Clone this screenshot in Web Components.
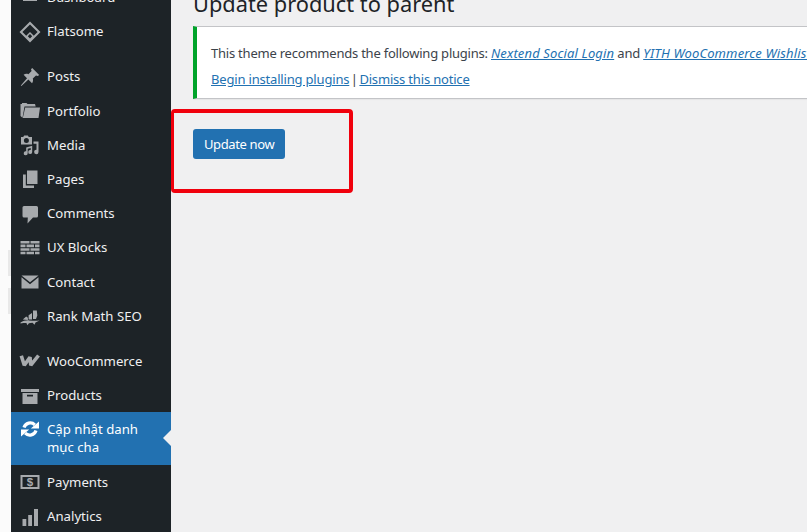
<!DOCTYPE html>
<html><head><meta charset="utf-8"><style>
html,body{margin:0;height:100%;overflow:hidden;background:#f0f0f1}
wp-app{font-family:"Noto Sans","Open Sans",sans-serif;font-size:13px}
</style></head><body>
<wp-app>
  <wp-sidebar slot="side">
    <wp-item label="Dashboard" icon="dash"></wp-item>
    <wp-item label="Flatsome" icon="flat"></wp-item>
    <wp-sep></wp-sep>
    <wp-item label="Posts" icon="pin"></wp-item>
    <wp-item label="Portfolio" icon="folder"></wp-item>
    <wp-item label="Media" icon="media"></wp-item>
    <wp-item label="Pages" icon="pages"></wp-item>
    <wp-item label="Comments" icon="comment"></wp-item>
    <wp-item label="UX Blocks" icon="blocks"></wp-item>
    <wp-item label="Contact" icon="mail"></wp-item>
    <wp-item label="Rank Math SEO" icon="rank"></wp-item>
    <wp-sep></wp-sep>
    <wp-item label="WooCommerce" icon="woo"></wp-item>
    <wp-item label="Products" icon="box"></wp-item>
    <wp-item label="Cập nhật danh mục cha" icon="sync" current></wp-item>
    <wp-item label="Payments" icon="pay"></wp-item>
    <wp-item label="Analytics" icon="chart"></wp-item>
  </wp-sidebar>
  <wp-main slot="main">
    <wp-title>Update product to parent</wp-title>
    <wp-notice>
      <span>This theme recommends the following plugins: <a><em>Nextend Social Login</em></a> and <a><em>YITH WooCommerce Wishlist</em></a>.</span>
      <span slot="actions"><a>Begin installing plugins</a><span class="sep"> | </span><a>Dismiss this notice</a></span>
    </wp-notice>
    <wp-button>Update now</wp-button>
  </wp-main>
  <wp-highlight slot="over"></wp-highlight>
</wp-app>
<script>
const ICONS={
dash:'<path d="M3 10a7 7 0 0 1 14 0v3H3z"/>',
flat:'<path fill-rule="evenodd" d="M10 -.5 20.500 10 10 20.500 -.5 10zM10 2.400 2.400 10l3.800 3.800L10 10l3.800 3.800 3.800-3.800zM10 12 7.800 14.200l2.200 2.200 2.200-2.200z"/>',
pin:'<path d="M12.200 1 19.200 8 17.800 9 16 8.400 12.800 11.600C13.400 13.400 13 15 12 16.200L8.400 12.600 1.400 19 .8 18.400 7 11.200 3.600 7.800C5 6.800 6.600 6.400 8.400 7.200L11.600 4 11 2.200Z"/>',
folder:'<path d="M.5 5V3h1.500V2h4.500l1 1h7.500l.7 2.500H4.500L2.500 16.800 .5 15z"/><path d="M5.200 6.500H20L18.500 17H2.800z"/>',
media:'<path fill-rule="evenodd" d="M1 2h2.200l1-1.500h3.600l1 1.500H12v7.500H1zM6.400 3a2.500 2.500 0 1 0 0 5 2.500 2.500 0 0 0 0-5z"/><path d="M13.500 6.500H18.500V17a2.200 2.200 0 1 1-2-2.200V8.800h-3zM6.200 12.500l6-1.700V17a2 2 0 1 1-1.500-1.900v-2.200l-3 .9V18.200a2 2 0 1 1-1.500-1.900z"/>',
pages:'<path d="M7 1.500h10.500V15H7z"/><path d="M3 5.500h2.800v11H14V19H3z"/>',
comment:'<path d="M4 2h12.500A1.500 1.500 0 0 1 18 3.500v8.500a1.500 1.500 0 0 1-1.500 1.500H13L7.500 19.500 7.800 13.500H4A1.500 1.500 0 0 1 2.500 12V3.500A1.500 1.500 0 0 1 4 2z"/>',
blocks:'<path d="M.5 3h9v2.600h-9zM10.500 3h9v2.600h-9zM.5 6.600h5v2.600h-5zM6.500 6.600h7.500v2.600H6.500zM15 6.600h4.500v2.600H15zM.5 10.200h9v2.600h-9zM10.500 10.200h9v2.600h-9zM.5 13.800h5v2.400h-5zM6.500 13.800h7.500v2.400H6.500zM15 13.800h4.500v2.400H15z"/>',
mail:'<path d="M1.500 3.500h17L10 10.300z"/><path d="M1.500 5.200 10 12.200l8.500-7V16.500h-17z"/>',
rank:'<path d="M.5 16.500C3 15 6 14.200 9 14.400c3 .2 6 .6 10.500 .2l-4 1.900-1 2.200-2-1.900-3.600.4-1.500 2-1-2.100c-2 0-4 0-5.900.400zM2.800 13.400l3.400-3 1.700 1.400V14zM8.600 9.200l3.400-2.200v6.600H8.600zM13 4.500h3.800l.5 5-1.300 3.600h-3z"/>',
woo:'<path d="M1.300 4.800 4.300 14.200 10 6.200 10.800 14.200 18.500 4.500" fill="none" stroke="#a7aaad" stroke-width="3.600" stroke-linejoin="bevel"/>',
box:'<path d="M1 3h18v3H1zM2.500 7h15v11h-15zM7 8.800v1.700h6V8.800z" fill-rule="evenodd"/>',
sync:'<g fill="none" stroke="#fff" stroke-width="3.200"><path d="M4 8.500A6.500 6.500 0 0 1 14.800 5.800"/><path d="M16 11.500A6.500 6.500 0 0 1 5.200 14.200"/></g><path d="M10.800 9.500H19V2.500zM9.200 10.500H1V17.500z"/>',
pay:'<path fill-rule="evenodd" d="M.5 3h19v14H.5zM2.500 5v10h15V5z"/><text x="10" y="14" text-anchor="middle" font-family="Liberation Sans,sans-serif" font-weight="700" font-size="11.500">$</text>',
chart:'<path d="M2.500 12h3.800v7H2.500zM8.200 8h3.800v11H8.200zM14 2h4v17h-4z"/>'
};
function def(name,css,html,setup){
  customElements.define(name,class extends HTMLElement{
    constructor(){super();this.attachShadow({mode:'open'}).innerHTML='<style>'+css+'</style>'+html;}
    connectedCallback(){setup&&setup(this);}
  });
}
def('wp-app',`:host{display:grid;grid-template-columns:11px 160px 1fr;height:532px;overflow:hidden;background:#f0f0f1;position:relative}
.strip{background:linear-gradient(#e9e9e9,#e9e9e9) 8px 250px/3px 26px no-repeat,linear-gradient(#e9e9e9,#e9e9e9) 8px 288px/3px 26px no-repeat,#fbfbfb}`,`<div class="strip"></div><slot name="side"></slot><slot name="main"></slot><slot name="over"></slot>`);
def('wp-highlight',`:host{position:absolute;left:171px;top:109px;width:182px;height:84px;box-sizing:border-box;border:4px solid #f0000c;border-radius:4px;border-left-width:3px}`,``);
def('wp-sidebar',`:host{display:flex;flex-direction:column;background:#1d2327;margin-top:-20px;height:552px}`,`<slot></slot>`);
def('wp-sep',`:host{display:block;flex:none;height:11px}`,``);
def('wp-item',`:host{display:flex;flex:none;position:relative;height:34.2px;color:#f0f0f1;font-size:13.2px;line-height:18px}
:host([current]){height:52.7px;background:#2271b1;color:#fff}
.ic{flex:none;width:36px;display:flex;justify-content:center;padding-left:1px;box-sizing:border-box;padding-top:7.5px}
svg{width:20px;height:20px;fill:#a7aaad;overflow:visible}
:host([current]) svg{fill:#fff}
.t{padding:8px 8px 0 0;box-sizing:border-box;width:124px}
:host([current]) .ic{padding-top:7px}
:host([current]) .arrow{position:absolute;right:0;top:18px;border:8px solid transparent;border-right-color:#f0f0f1;border-left:0}`,
`<div class="ic"><svg viewBox="0 0 20 20"></svg></div><div class="t"></div><div class="arrow"></div>`,
e=>{e.shadowRoot.querySelector('svg').innerHTML=ICONS[e.getAttribute('icon')]||'';e.shadowRoot.querySelector('.t').textContent=e.getAttribute('label');});
def('wp-main',`:host{display:flex;flex-direction:column;align-items:flex-start;min-width:0;padding-left:22px;overflow:hidden}`,`<slot></slot>`);
def('wp-title',`:host{display:block;font-size:21.8px;line-height:26px;color:#1d2327;margin-top:-9px;white-space:nowrap}`,`<slot></slot>`);
def('wp-notice',`:host{display:block;box-sizing:border-box;width:640px;height:73px;margin-top:9px;background:#fff;border:1px solid #c3c4c7;border-left:4px solid #00a32a;border-right:0;padding:0 0 0 14px;font-size:13px;letter-spacing:-.22px;color:#3c434a;white-space:nowrap;box-shadow:0 1px 1px rgba(0,0,0,.04)}
.a{line-height:18px;padding-top:17px}.b{line-height:18px;padding-top:8px}`,`<div class="a"><slot></slot></div><div class="b"><slot name="actions"></slot></div>`);
def('wp-button',`:host{display:block;margin-top:30px;background:#2271b1;color:#fff;border-radius:3px;font-size:13px;letter-spacing:-.38px;line-height:30px;padding:0 11px;height:30px}`,`<slot></slot>`);
document.querySelectorAll('wp-notice a').forEach(a=>{a.style.cssText='color:#2271b1;text-decoration:underline';});
document.querySelectorAll('wp-notice em').forEach(a=>{a.style.letterSpacing='.14px';});
document.querySelectorAll('wp-notice [slot=actions] a').forEach(a=>{a.style.letterSpacing='-.18px';});
document.querySelectorAll('wp-notice .sep').forEach(a=>{a.style.cssText='word-spacing:-1.6px';});
</script>
</body></html>
